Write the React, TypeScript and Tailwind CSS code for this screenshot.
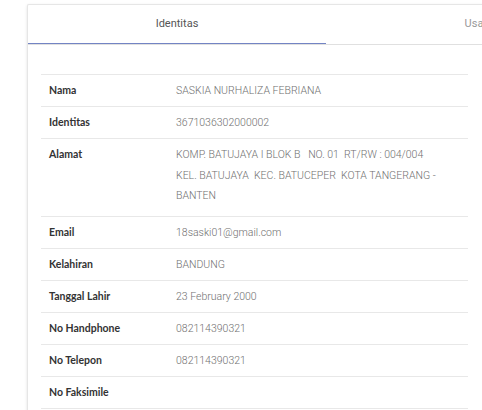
import React from "react";

const rows: { label: string; value: string[] }[] = [
  { label: "Nama", value: ["SASKIA NURHALIZA FEBRIANA"] },
  { label: "Identitas", value: ["3671036302000002"] },
  {
    label: "Alamat",
    value: [
      "KOMP. BATUJAYA I BLOK B   NO. 01  RT/RW : 004/004",
      "KEL. BATUJAYA  KEC. BATUCEPER  KOTA TANGERANG -",
      "BANTEN",
    ],
  },
  { label: "Email", value: ["18saski01@gmail.com"] },
  { label: "Kelahiran", value: ["BANDUNG"] },
  { label: "Tanggal Lahir", value: ["23 February 2000"] },
  { label: "No Handphone", value: ["082114390321"] },
  { label: "No Telepon", value: ["082114390321"] },
  { label: "No Faksimile", value: [""] },
];

export default function App() {
  return (
    <div className="w-[482px] h-[410px] overflow-hidden bg-white">
      <div className="ml-[27px] mt-[4px] w-[470px] bg-white border-l border-t border-[#e6e6e6] shadow-[0_1px_3px_rgba(0,0,0,0.12)] rounded-tl-[2px]">
        <div className="flex h-[40px] border-b border-[#e0e0e0] overflow-hidden">
          <div className="relative w-[298px] shrink-0 flex items-center justify-center text-[11px] text-[#555] font-['Roboto',sans-serif]">
            Identitas
            <div className="absolute left-0 right-0 bottom-[-1px] h-[2px] bg-[#7384c4]" />
          </div>
          <div className="w-[298px] shrink-0 pl-[10px] flex items-center justify-center text-[11px] text-[#999] font-['Roboto',sans-serif]">
            Usaha
          </div>
        </div>
        <div className="pt-[29px] pl-[13px] pb-4">
          <div className="w-[427px] border-t border-[#e8e8e8]">
            {rows.map((r) => (
              <div key={r.label} className="flex border-b border-[#e8e8e8] py-[9px]">
                <div className="w-[135px] shrink-0 pl-[8px] text-[10.5px] leading-[13px] font-bold text-[#333] font-['Lato',sans-serif]">
                  {r.label}
                </div>
                <div
                  className={
                    r.value.length > 1
                      ? "flex flex-col gap-[7.5px] pb-[5px] text-[10.5px] leading-[13px] font-light text-[#707070] font-['Roboto',sans-serif] whitespace-pre"
                      : "flex flex-col text-[10.5px] leading-[13px] font-light text-[#707070] font-['Roboto',sans-serif] whitespace-pre"
                  }
                >
                  {r.value.map((v, i) => (
                    <span key={i}>{v || "\u00a0"}</span>
                  ))}
                </div>
              </div>
            ))}
          </div>
        </div>
      </div>
    </div>
  );
}
